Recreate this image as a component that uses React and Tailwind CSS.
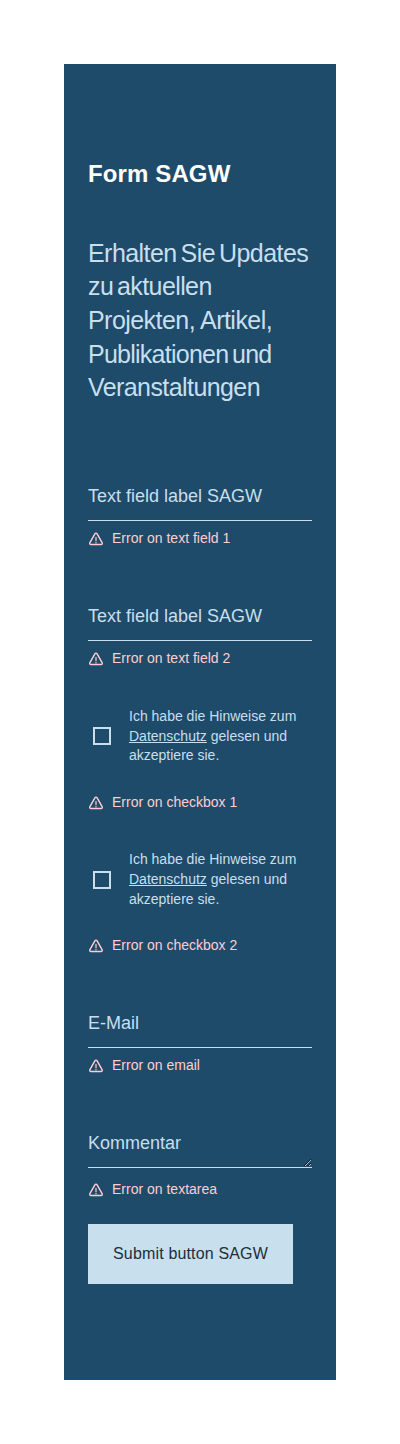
const AlertIcon = () => (
  <svg className="mt-[3px] h-4 w-4 shrink-0" viewBox="0 0 16 16" fill="none" stroke="currentColor" strokeWidth="1.4" strokeLinecap="round" strokeLinejoin="round">
    <path d="M6.9 2.8a1.25 1.25 0 0 1 2.2 0l5 8.9c.5.9 0 1.8-1 1.8H2.9c-1 0-1.5-.9-1-1.8z" />
    <path d="M8 6.4v3.3M8 11.3v.5" strokeWidth="1.2" />
  </svg>
);

const FieldError = ({ children, className = "" }) => (
  <div className={`flex h-5 items-start gap-2 text-sm leading-5 text-[#ffcdd2] ${className}`}>
    <AlertIcon />
    <span>{children}</span>
  </div>
);

const TextField = ({ label, error }) => (
  <div className="h-[120px] pt-5">
    <div className="h-10 border-b border-[#c8dfee] text-lg leading-[30px]">{label}</div>
    <FieldError className="mt-[7px]">{error}</FieldError>
  </div>
);

const TextArea = ({ label, error }) => (
  <div className="h-[116px] pt-5">
    <textarea
      className="block h-10 w-full resize overflow-auto rounded-none border-b border-[#c8dfee] bg-transparent p-0 text-lg leading-[30px] text-[#c8dfee] outline-none"
      defaultValue={label}
    />
    <FieldError className="mt-[11px]">{error}</FieldError>
  </div>
);

const Checkbox = ({ error }) => (
  <div className="h-[143.4px]">
    <div className="flex items-center">
      <span className="ml-[5px] h-[18px] w-[18px] shrink-0 border-2 border-[#c8dfee]" />
      <p className="ml-[18px] text-sm leading-[19.6px]">
        Ich habe die Hinweise zum <span className="underline">Datenschutz</span> gelesen und akzeptiere sie.
      </p>
    </div>
    <FieldError className="mt-[26px]">{error}</FieldError>
  </div>
);

export default function App() {
  return (
    <div className="h-[1444px] bg-white p-16 font-['Liberation_Sans',sans-serif]">
      <main className="h-[1316px] bg-[#1e4b69] px-6 pt-[93px] text-[#c8dfee]">
        <h1 className="h-[79.8px] text-2xl leading-[34px] font-bold tracking-[0.12px] text-white">Form SAGW</h1>
        <h2 className="h-[224.2px] text-[25px] leading-[33.6px] whitespace-nowrap">
          <span className="tracking-[-0.55px] [word-spacing:-2.5px]">Erhalten Sie Updates</span><br />
          <span className="tracking-[-0.6px] [word-spacing:-2.5px]">zu aktuellen</span><br />
          <span className="tracking-[-0.55px] [word-spacing:0px]">Projekten, Artikel,</span><br />
          <span className="tracking-[-0.75px] [word-spacing:-2.5px]">Publikationen und</span><br />
          <span className="tracking-[-0.58px]">Veranstaltungen</span>
        </h2>
        <TextField label="Text field label SAGW" error="Error on text field 1" />
        <TextField label="Text field label SAGW" error="Error on text field 2" />
        <div className="h-[287px] pt-[6px]">
          <Checkbox error="Error on checkbox 1" />
          <Checkbox error="Error on checkbox 2" />
        </div>
        <TextField label="E-Mail" error="Error on email" />
        <TextArea label="Kommentar" error="Error on textarea" />
        <button className="block h-[60px] w-[205px] bg-[#c8dfee] text-base tracking-[0.16px] text-[#1f2d38]">Submit button SAGW</button>
      </main>
    </div>
  );
}
